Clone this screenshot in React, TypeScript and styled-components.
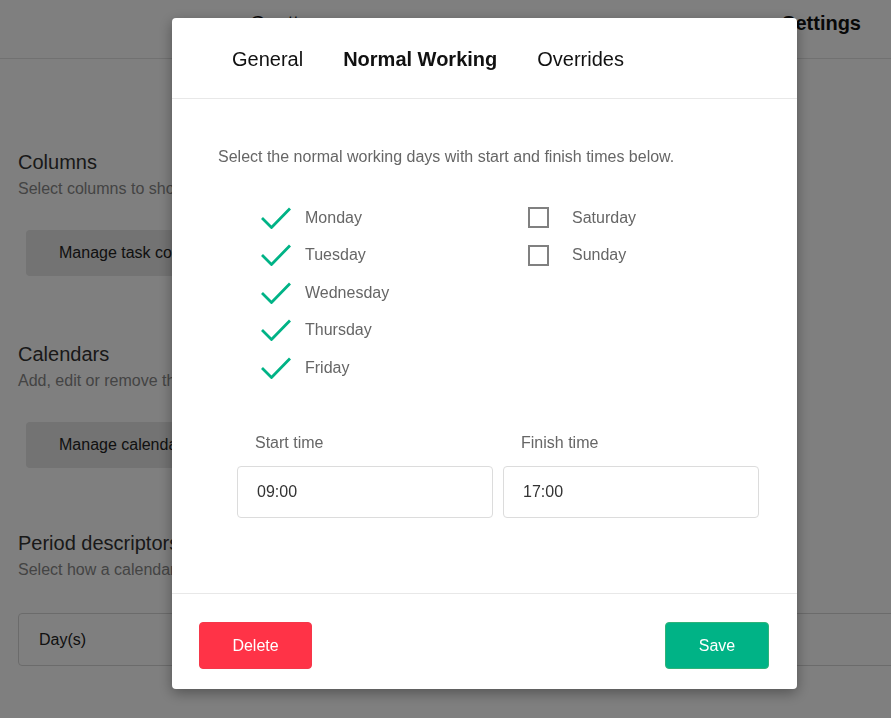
import React from "react";
import styled, { createGlobalStyle } from "styled-components";

const Global = createGlobalStyle`
  html, body { margin: 0; padding: 0; background: #fff; }
  body { font-family: "Liberation Sans", Arial, sans-serif; overflow: hidden; }
  * { box-sizing: border-box; }
`;

const Page = styled.div`
  width: 891px;
  height: 718px;
  background: #fff;
  overflow: hidden;
`;

const TopBar = styled.header`
  height: 59px;
  border-bottom: 1px solid #e2e2e2;
  display: flex;
  align-items: center;
  justify-content: space-between;
  padding: 0 30px 12px 250px;
`;

const TopItem = styled.span<{ $bold?: boolean }>`
  font-size: 20px;
  color: #111;
  font-weight: ${(p) => (p.$bold ? 700 : 400)};
`;

const Content = styled.main`
  padding: 91px 0 0 18px;
  display: flex;
  flex-direction: column;
`;

const Section = styled.section<{ $after?: number }>`
  display: flex;
  flex-direction: column;
  margin-bottom: ${(p) => p.$after ?? 66}px;
`;

const SectionTitle = styled.h2`
  margin: 0;
  font-size: 20px;
  line-height: 24px;
  font-weight: 400;
  color: #333;
`;

const SectionText = styled.p`
  margin: 5px 0 0;
  font-size: 16px;
  line-height: 20px;
  color: #888;
  white-space: nowrap;
`;

const GreyButton = styled.div`
  margin: 31px 0 0 8px;
  width: 300px;
  height: 46px;
  border-radius: 4px;
  background: #e6e6e6;
  display: flex;
  align-items: center;
  padding-left: 33px;
  font-size: 16px;
  color: #222;
`;

const SelectBox = styled.div`
  margin-top: 33px;
  width: 900px;
  height: 53px;
  border: 1px solid #d6d6d6;
  border-radius: 4px;
  display: flex;
  align-items: center;
  padding-left: 20px;
  font-size: 16px;
  color: #222;
`;

const Overlay = styled.div`
  position: fixed;
  inset: 0;
  background: rgba(0, 0, 0, 0.5);
  padding: 18px 0 0 172px;
`;

const Modal = styled.div`
  width: 625px;
  height: 671px;
  background: #fff;
  border-radius: 4px;
  box-shadow: 0 4px 14px rgba(0, 0, 0, 0.35);
  display: flex;
  flex-direction: column;
  overflow: hidden;
`;

const Tabs = styled.nav`
  height: 81px;
  border-bottom: 1px solid #e8e8e8;
  display: flex;
  align-items: center;
  gap: 40px;
  padding: 2px 0 0 60px;
  flex-shrink: 0;
`;

const Tab = styled.span<{ $active?: boolean }>`
  font-size: 20px;
  color: #111;
  font-weight: ${(p) => (p.$active ? 700 : 400)};
`;

const Body = styled.div`
  flex: 1;
  padding: 48px 38px 0 46px;
  display: flex;
  flex-direction: column;
`;

const Intro = styled.p`
  margin: 0;
  font-size: 16px;
  line-height: 20px;
  color: #666;
`;

const DayGrid = styled.div`
  margin: 32px 0 0 43px;
  display: grid;
  grid-template-columns: 267px 1fr;
  grid-auto-flow: column;
  grid-template-rows: repeat(5, 37.5px);
`;

const DayRow = styled.label<{ $col: number; $row: number }>`
  grid-column: ${(p) => p.$col};
  grid-row: ${(p) => p.$row};
  display: flex;
  align-items: center;
  font-size: 16px;
  color: #666;
`;

const Marker = styled.span`
  width: 30px;
  height: 22px;
  margin-right: 14px;
  display: flex;
  align-items: center;
`;

const EmptyBox = styled.span`
  width: 21px;
  height: 21px;
  border: 2px solid #808080;
`;

const Times = styled.div`
  margin: 46px 0 0 19px;
  display: grid;
  grid-template-columns: 256px 256px;
  column-gap: 10px;
`;

const Field = styled.div`
  display: flex;
  flex-direction: column;
`;

const FieldLabel = styled.span`
  font-size: 16px;
  line-height: 20px;
  color: #666;
  padding-left: 18px;
  margin-bottom: 13px;
`;

const TimeInput = styled.div`
  height: 52px;
  border: 1px solid #dcdcdc;
  border-radius: 4px;
  display: flex;
  align-items: center;
  padding-left: 19px;
  font-size: 16px;
  color: #333;
`;

const Footer = styled.div`
  height: 96px;
  border-top: 1px solid #e8e8e8;
  display: flex;
  justify-content: space-between;
  align-items: flex-start;
  padding: 28px 28px 0 27px;
  flex-shrink: 0;
`;

const ActionButton = styled.button<{ $variant: "danger" | "primary" }>`
  height: 47px;
  width: ${(p) => (p.$variant === "danger" ? "113px" : "104px")};
  border-radius: 4px;
  border: 1px solid ${(p) => (p.$variant === "danger" ? "#f5384a" : "#2fb37a")};
  background: ${(p) => (p.$variant === "danger" ? "#ff3347" : "#00b386")};
  color: #fff;
  font-family: "Liberation Sans", Arial, sans-serif;
  font-size: 16px;
  cursor: pointer;
`;

const Check = () => (
  <svg width="30" height="22" viewBox="0 0 30 22">
    <path d="M1 11 L10.5 20.5 L29 1.5" fill="none" stroke="#00b386" strokeWidth="2.8" />
  </svg>
);

const weekdays = ["Monday", "Tuesday", "Wednesday", "Thursday", "Friday"];
const weekend = ["Saturday", "Sunday"];

export default function App() {
  return (
    <>
      <Global />
      <Page>
        <TopBar>
          <TopItem>Gantt</TopItem>
          <TopItem $bold>Settings</TopItem>
        </TopBar>
        <Content>
          <Section>
            <SectionTitle>Columns</SectionTitle>
            <SectionText>Select columns to show in the task list.</SectionText>
            <GreyButton>Manage task columns</GreyButton>
          </Section>
          <Section $after={63}>
            <SectionTitle>Calendars</SectionTitle>
            <SectionText>Add, edit or remove the calendars used in this project.</SectionText>
            <GreyButton>Manage calendars</GreyButton>
          </Section>
          <Section>
            <SectionTitle>Period descriptors</SectionTitle>
            <SectionText>Select how a calendar period is described.</SectionText>
            <SelectBox>Day(s)</SelectBox>
          </Section>
        </Content>
      </Page>
      <Overlay>
        <Modal>
          <Tabs>
            <Tab>General</Tab>
            <Tab $active>Normal Working</Tab>
            <Tab>Overrides</Tab>
          </Tabs>
          <Body>
            <Intro>Select the normal working days with start and finish times below.</Intro>
            <DayGrid>
              {weekdays.map((d, i) => (
                <DayRow key={d} $col={1} $row={i + 1}>
                  <Marker>
                    <Check />
                  </Marker>
                  {d}
                </DayRow>
              ))}
              {weekend.map((d, i) => (
                <DayRow key={d} $col={2} $row={i + 1}>
                  <Marker>
                    <EmptyBox />
                  </Marker>
                  {d}
                </DayRow>
              ))}
            </DayGrid>
            <Times>
              <Field>
                <FieldLabel>Start time</FieldLabel>
                <TimeInput>09:00</TimeInput>
              </Field>
              <Field>
                <FieldLabel>Finish time</FieldLabel>
                <TimeInput>17:00</TimeInput>
              </Field>
            </Times>
          </Body>
          <Footer>
            <ActionButton $variant="danger">Delete</ActionButton>
            <ActionButton $variant="primary">Save</ActionButton>
          </Footer>
        </Modal>
      </Overlay>
    </>
  );
}
